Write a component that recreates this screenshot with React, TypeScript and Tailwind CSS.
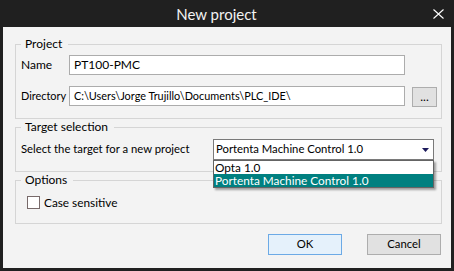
import { FC } from "react";

const GroupBox: FC<{ title: string; children: React.ReactNode; className?: string }> = ({
  title,
  children,
  className,
}) => (
  <fieldset className={`border border-[#d5d5d5] ${className ?? ""}`}>
    <legend className="ml-[5px] pl-[4px] pr-[6px] leading-[16px] text-[12px]">{title}</legend>
    {children}
  </fieldset>
);

const App: FC = () => {
  return (
    <div className="w-[454px] h-[271px] bg-[#202020] flex flex-col font-['Lato',sans-serif] text-[11.3px] text-black">
      {/* title bar */}
      <div className="h-[27px] flex items-center pl-[21px] text-[#f2f2f2]">
        <div className="flex-1 text-center text-[15px] leading-[20px]">New project</div>
        <div className="w-[42px] flex items-center">
          <svg width="11" height="10" viewBox="0 0 11 10" className="ml-[21px]">
            <path d="M0.5 0.5 L10.5 9.5 M10.5 0.5 L0.5 9.5" stroke="#ffffff" strokeWidth="1.1" />
          </svg>
        </div>
      </div>

      <div className="mx-[3px] mb-[3px] flex-1 bg-[#f3f3f3] pl-[12px] pr-[9px] pt-[9px]">
        <GroupBox title="Project">
          <div className="pt-[3px] pb-[12px] pl-[5px] pr-[4px] text-[12px]">
            <div className="flex items-center h-[20px]">
              <span className="w-[48px]">Name</span>
              <div className="w-[336px] h-[20px] border border-[#acacac] bg-white pl-[4px] leading-[18px]">
                PT100-PMC
              </div>
            </div>
            <div className="flex items-center h-[20px] mt-[11px]">
              <span className="w-[48px] text-[10.9px]">Directory</span>
              <div className="w-[336px] h-[20px] border border-[#acacac] bg-white pl-[4px] leading-[18px] text-[10.9px]">
                C:\Users\Jorge Trujillo\Documents\PLC_IDE\
              </div>
              <button className="ml-[7px] mt-[2px] w-[25px] h-[20px] border border-[#adadad] bg-[#e1e1e1] leading-[14px]">
                ...
              </button>
            </div>
          </div>
        </GroupBox>

        <GroupBox title="Target selection">
          <div className="pt-[4px] pb-[11px] pl-[5px] pr-[7px] flex items-center justify-between">
            <span>Select the target for a new project</span>
            <div className="relative w-[221px] h-[21px]">
              <div className="h-full border border-[#7a7a7a] bg-white flex items-center pl-[2px] pr-[4px]">
                <span className="flex-1">Portenta Machine Control 1.0</span>
                <svg width="7" height="4" viewBox="0 0 7 4">
                  <polygon points="0,0 7,0 3.5,4" fill="#1c1a5c" />
                </svg>
              </div>
              <div className="absolute left-0 top-full w-[221px] border border-[#646464] bg-white shadow-[2px_2px_2px_rgba(0,0,0,0.35)] z-10 text-[11.8px]">
                <div className="h-[13px] leading-[13px] pl-[1px]">Opta 1.0</div>
                <div className="h-[13px] leading-[13px] pl-[1px] bg-[#008080] text-white">
                  Portenta Machine Control 1.0
                </div>
              </div>
            </div>
          </div>
        </GroupBox>

        <GroupBox title="Options">
          <div className="pt-[8px] pb-[14px] pl-[11px] flex items-center">
            <div className="w-[13px] h-[13px] border border-[#786a6a] bg-white" />
            <span className="ml-[4px] leading-[13px] text-[11.8px]">Case sensitive</span>
          </div>
        </GroupBox>

        <div className="flex justify-end gap-[25px] mt-[10px] pr-[1px]">
          <button className="w-[74px] h-[21px] border border-[#6caae6] bg-[#e5f1fb]">OK</button>
          <button className="w-[74px] h-[21px] border border-[#adadad] bg-[#e1e1e1]">Cancel</button>
        </div>
      </div>
    </div>
  );
};

export default App;
